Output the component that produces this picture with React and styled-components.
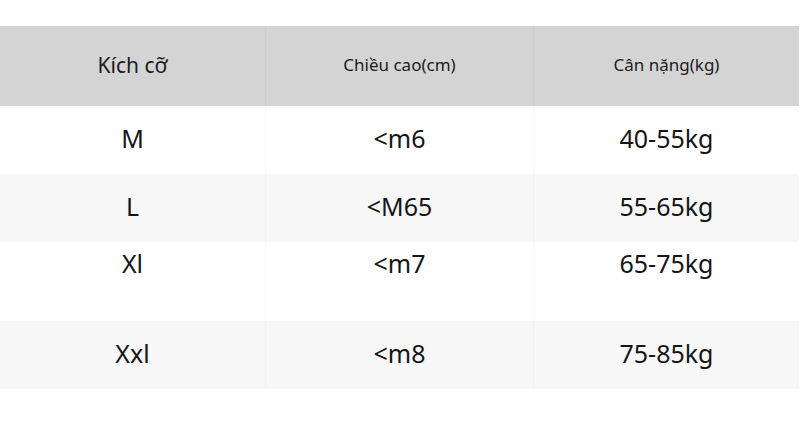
import styled, { createGlobalStyle } from "styled-components";

const GlobalStyle = createGlobalStyle`
    html, body {
        margin: 0;
        padding: 0;
        background: #ffffff;
    }
    body {
        font-family: "Noto Sans", "Open Sans", sans-serif;
        color: #141414;
    }
`

const Page = styled.div `
    width: 800px;
    height: 445px;
    padding-top: 26px;
    box-sizing: border-box;
    background: #ffffff;
`

const Table = styled.div `
    width: 799px;
    display: flex;
    flex-direction: column;
`

const Row = styled.div `
    display: grid;
    grid-template-columns: 265px 268px 1fr;
    height: ${props => props.height}px;
    background-color: ${props => props.bg};
`

const Cell = styled.div `
    display: flex;
    justify-content: center;
    align-items: ${props => props.top ? "flex-start" : "center"};
    padding-top: ${props => props.top ? "7px" : "0"};
    padding-bottom: ${props => props.top ? "0" : "5px"};
    box-sizing: border-box;
    font-size: ${props => props.size}px;
    line-height: 28px;
    color: #151515;
    border-left: ${props => props.first ? "none" : "1px solid rgba(0, 0, 0, 0.018)"};
`

const HeaderCell = styled(Cell) `
    color: #1c1c1c;
    padding-bottom: 2px;
    border-left: ${props => props.first ? "none" : "1px solid #cdcdcd"};
`

const rows = [
    { size: "M", height: "<m6", weight: "40-55kg", bg: "#ffffff", h: 68 },
    { size: "L", height: "<M65", weight: "55-65kg", bg: "#f7f7f7", h: 68 },
    { size: "Xl", height: "<m7", weight: "65-75kg", bg: "#ffffff", h: 79, top: true },
    { size: "Xxl", height: "<m8", weight: "75-85kg", bg: "#f7f7f7", h: 68 },
];

const App = () => {
    return (
        <>
            <GlobalStyle />
            <Page>
                <Table>
                    <Row height={80} bg="#d4d4d4">
                        <HeaderCell first size={21}>Kích cỡ</HeaderCell>
                        <HeaderCell size={17}>Chiều cao(cm)</HeaderCell>
                        <HeaderCell size={17}>Cân nặng(kg)</HeaderCell>
                    </Row>
                    {rows.map((r) => (
                        <Row key={r.size} height={r.h} bg={r.bg}>
                            <Cell first size={25} top={r.top}>{r.size}</Cell>
                            <Cell size={25} top={r.top}>{r.height}</Cell>
                            <Cell size={25} top={r.top}>{r.weight}</Cell>
                        </Row>
                    ))}
                </Table>
            </Page>
        </>
    )
}

export default App;
